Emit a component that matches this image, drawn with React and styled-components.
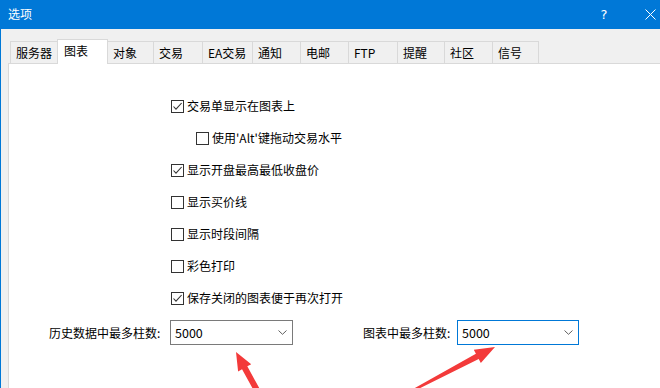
import styled, { createGlobalStyle } from "styled-components";

const GlobalStyle = createGlobalStyle`
  html, body {
    margin: 0;
    padding: 0;
    background: #ffffff;
    overflow: hidden;
  }
`;

const Frame = styled.div`
  position: relative;
  width: 660px;
  height: 388px;
  overflow: hidden;
  font-family: "Noto Sans CJK SC", "Microsoft YaHei", sans-serif;
  font-size: 12px;
  color: #000;
`;

const Window = styled.div`
  width: 672px;
  height: 388px;
  border-left: 1px solid #0078d7;
  background: #f0f0f0;
  display: flex;
  flex-direction: column;
`;

const TitleBar = styled.div`
  height: 29px;
  flex-shrink: 0;
  background: #0078d7;
  color: #fff;
  display: flex;
  align-items: center;
  padding-left: 7px;
`;

const Title = styled.span`
  font-size: 12px;
  line-height: 16px;
  margin-top: -1px;
`;

const CaptionButton = styled.div`
  width: 46px;
  height: 29px;
  display: flex;
  align-items: center;
  justify-content: center;
  margin-left: ${(p) => (p.$first ? "auto" : "0")};
  font-family: "DejaVu Sans", sans-serif;
  font-size: 13px;
`;

const Body = styled.div`
  flex: 1;
  display: flex;
  flex-direction: column;
  padding: 10px 0 0 7px;
`;

const TabStrip = styled.div`
  height: 24px;
  display: flex;
  align-items: flex-end;
  padding-left: 2px;
`;

const Tab = styled.div`
  position: relative;
  box-sizing: border-box;
  width: ${(p) => p.$w}px;
  height: ${(p) => (p.$active ? 25 : 22)}px;
  margin-right: -1px;
  margin-bottom: ${(p) => (p.$active ? -1 : 0)}px;
  z-index: ${(p) => (p.$active ? 2 : 1)};
  border: 1px solid #d9d9d9;
  border-bottom: none;
  background: ${(p) => (p.$active ? "#ffffff" : "#f0f0f0")};
  padding: ${(p) => (p.$active ? "3px 0 0 6px" : "0 0 0 5px")};
  display: flex;
  align-items: ${(p) => (p.$active ? "flex-start" : "center")};
  line-height: 16px;
  white-space: nowrap;
`;

const Panel = styled.div`
  flex: 1;
  background: #fff;
  border-top: 1px solid #d9d9d9;
  border-left: 1px solid #d9d9d9;
  display: flex;
  flex-direction: column;
`;

const Options = styled.div`
  margin-left: 162px;
  padding-top: 26px;
  display: flex;
  flex-direction: column;
`;

const OptionRow = styled.div`
  height: 32px;
  display: flex;
  align-items: center;
  gap: 3px;
  padding-left: ${(p) => (p.$indent ? 25 : 0)}px;
  line-height: 16px;
`;

const Box = styled.span`
  width: 13px;
  height: 13px;
  box-sizing: border-box;
  border: 1px solid #333;
  background: #fff;
  display: flex;
  align-items: center;
  justify-content: center;
  flex-shrink: 0;
`;

const LimitRow = styled.div`
  margin-top: 6px;
  padding-left: 40px;
  display: flex;
  align-items: center;
`;

const Label = styled.span`
  width: ${(p) => p.$w}px;
  flex-shrink: 0;
  white-space: nowrap;
  line-height: 16px;
`;

const Combo = styled.div`
  width: ${(p) => p.$w}px;
  height: 25px;
  box-sizing: border-box;
  border: 1px solid ${(p) => (p.$focus ? "#0078d7" : "#7a7a7a")};
  background: #fff;
  display: flex;
  align-items: center;
  padding: 0 5px 0 4px;
  margin-right: ${(p) => p.$gap || 0}px;
  font-size: 12.5px;
`;

const ComboValue = styled.span`
  flex: 1;
  line-height: 16px;
`;

const Overlay = styled.svg`
  position: absolute;
  left: 0;
  top: 0;
  pointer-events: none;
`;

const tabs = [
  ["服务器", 48],
  ["图表", 51],
  ["对象", 47],
  ["交易", 50],
  ["EA交易", 51],
  ["通知", 49],
  ["电邮", 49],
  ["FTP", 50],
  ["提醒", 48],
  ["社区", 49],
  ["信号", 47],
];

const options = [
  { text: "交易单显示在图表上", checked: true },
  { text: "使用'Alt'键拖动交易水平", indent: true },
  { text: "显示开盘最高最低收盘价", checked: true },
  { text: "显示买价线" },
  { text: "显示时段间隔" },
  { text: "彩色打印" },
  { text: "保存关闭的图表便于再次打开", checked: true },
];

const Check = () => (
  <svg width="11" height="11" viewBox="0 0 11 11">
    <path d="M1.5 5.5 L4 8.2 L9.6 2" fill="none" stroke="#333" strokeWidth="1.1" />
  </svg>
);

const Chevron = () => (
  <svg width="9" height="5" viewBox="0 0 9 5">
    <path d="M0.5 0.5 L4.5 4.3 L8.5 0.5" fill="none" stroke="#606060" strokeWidth="1" />
  </svg>
);

// arrow polygon from tail to tip, shaft tapering from tw to sw
const arrowPoints = (x1, y1, x2, y2, tw, sw, hl, hw) => {
  const len = Math.hypot(x2 - x1, y2 - y1);
  const ux = (x2 - x1) / len;
  const uy = (y2 - y1) / len;
  const nx = -uy;
  const ny = ux;
  const bx = x2 - ux * hl;
  const by = y2 - uy * hl;
  const pts = [
    [x1 + (nx * tw) / 2, y1 + (ny * tw) / 2],
    [bx + (nx * sw) / 2, by + (ny * sw) / 2],
    [bx + (nx * hw) / 2, by + (ny * hw) / 2],
    [x2, y2],
    [bx - (nx * hw) / 2, by - (ny * hw) / 2],
    [bx - (nx * sw) / 2, by - (ny * sw) / 2],
    [x1 - (nx * tw) / 2, y1 - (ny * tw) / 2],
  ];
  return pts.map((p) => p.join(",")).join(" ");
};

const App = () => {
  return (
    <Frame>
      <GlobalStyle />
      <Window>
        <TitleBar>
          <Title>选项</Title>
          <CaptionButton $first>?</CaptionButton>
          <CaptionButton>
            <svg width="11" height="11" viewBox="0 0 11 11">
              <path d="M0.5 0.5 L10.5 10.5 M10.5 0.5 L0.5 10.5" stroke="#fff" strokeWidth="1" />
            </svg>
          </CaptionButton>
        </TitleBar>
        <Body>
          <TabStrip>
            {tabs.map(([name, w], i) => (
              <Tab key={name} $w={w} $active={i === 1}>
                {name}
              </Tab>
            ))}
          </TabStrip>
          <Panel>
            <Options>
              {options.map((o) => (
                <OptionRow key={o.text} $indent={o.indent}>
                  <Box>{o.checked && <Check />}</Box>
                  {o.text}
                </OptionRow>
              ))}
            </Options>
            <LimitRow>
              <Label $w={121}>历史数据中最多柱数:</Label>
              <Combo $w={123} $gap={70}>
                <ComboValue>5000</ComboValue>
                <Chevron />
              </Combo>
              <Label $w={94}>图表中最多柱数:</Label>
              <Combo $w={122} $focus>
                <ComboValue>5000</ComboValue>
                <Chevron />
              </Combo>
            </LimitRow>
          </Panel>
        </Body>
      </Window>
      <Overlay width="660" height="388" viewBox="0 0 660 388">
        <polygon points={arrowPoints(258, 392, 236, 352, 6, 6, 18, 15)} fill="#f33a3a" />
        <polygon points={arrowPoints(408, 393, 495, 347, 2, 6, 20, 15)} fill="#f33a3a" />
      </Overlay>
    </Frame>
  );
};

export default App;
